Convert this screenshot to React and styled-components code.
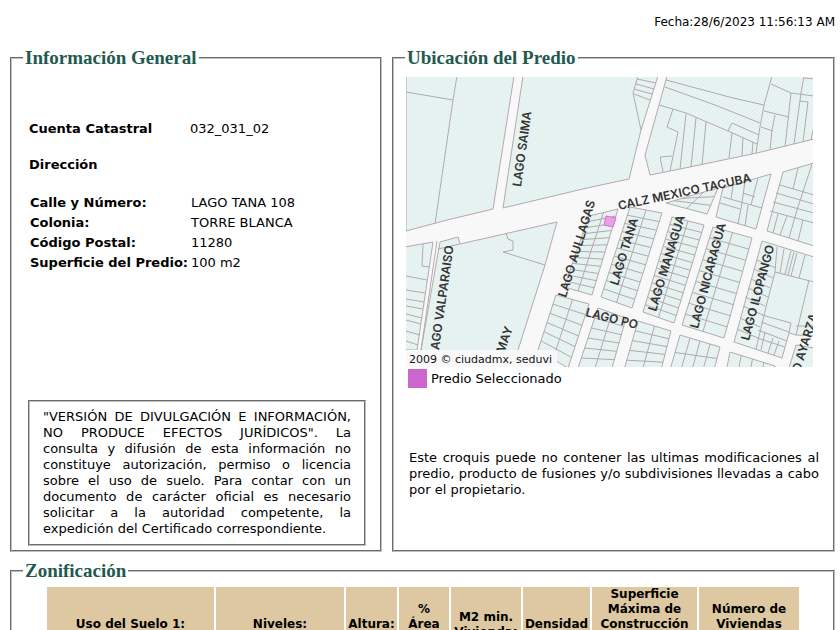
import React from 'react'

import styled, { createGlobalStyle } from 'styled-components'

const GlobalStyle = createGlobalStyle`
    body {
        margin: 0;
        background: #FFF;
        color: #000;
        font-family: Verdana, 'DejaVu Sans', sans-serif;
        font-size: 13px;
        line-height: 16px;
        overflow-x: hidden;
    }
`

const StyledPage = styled.main`
    padding: 14px 5px 0 10px;
`

const StyledDate = styled.div`
    text-align: right;
    font-size: 12px;
    margin-bottom: 18px;
`

const StyledColumns = styled.div`
    display: grid;
    grid-template-columns: 372fr 443fr;
    gap: 10px;
    margin-bottom: 9px;
`

const StyledFieldset = styled.fieldset`
    margin: 0;
    min-width: 0;
    padding: 0 11px;
    border: 2px groove #C0C0C0;
`

const StyledLegend = styled.legend`
    padding: 0 2px;
    color: #1F5A4E;
    font-family: 'Liberation Serif', serif;
    font-size: 19px;
    font-weight: bold;
    line-height: 20px;
`

const StyledGeneral = styled.div`
    display: flex;
    flex-direction: column;
    padding: 53px 3px 4px 5px;
`

const StyledList = styled.dl`
    display: grid;
    grid-template-columns: ${props => props.$labelWidth} 1fr;
    row-gap: ${props => props.$gap};
    margin: 0;
    padding-left: ${props => props.$indent || '0'};
    white-space: nowrap;

    dt {
        font-weight: bold;
    }

    dd {
        margin: 0;
    }
`

const StyledSubtitle = styled.h2`
    margin: 20px 0 22px 1px;
    font-size: 13px;
    line-height: 16px;
`

const StyledNotice = styled.p`
    margin: 129px 0 0;
    padding: 7px 13px;
    border: 2px groove #C0C0C0;
    text-align: justify;
`

const StyledLocation = styled.div`
    padding: 9px 3px 0 1px;
`

const StyledMap = styled.svg`
    display: block;
    width: 100%;
    max-width: 407px;
    height: auto;

    .block {
        fill: url(#hatch);
        stroke: #B3AAAB;
    }

    .lot {
        fill: none;
        stroke: #B3AAAB;
    }

    .street {
        fill: #333;
        font: 600 12px Inter, sans-serif;
    }

    .credit {
        fill: #111;
        font: 11px 'DejaVu Sans', sans-serif;
    }
`

const StyledKey = styled.div`
    display: flex;
    align-items: center;
    gap: 4px;
    margin: 2px 0 62px 2px;
`

const StyledSwatch = styled.span`
    width: 19px;
    height: 19px;
    background: #CC66CC;
`

const StyledWarning = styled.p`
    margin: 0 0 0 3px;
    text-align: justify;
`

const StyledTableWrapper = styled.div`
    padding: 4px 22px 12px;
`

const StyledTable = styled.table`
    width: 100%;
    max-width: 756px;
    table-layout: fixed;
    border-spacing: 2px;
`

const StyledTh = styled.th`
    width: ${props => props.$width}px;
    padding: 0;
    background: #DDC8A2;
    font-size: 12px;
    line-height: 15px;
    vertical-align: middle;
    white-space: pre-line;
`

const address = [
    ['Calle y Número:', 'LAGO TANA 108'],
    ['Colonia:', 'TORRE BLANCA'],
    ['Código Postal:', '11280'],
    ['Superficie del Predio:', '100 m2']
]

const headers = [
    ['Uso del Suelo 1:', 167],
    ['Niveles:', 128],
    ['Altura:', 51],
    ['%\nÁrea\nLibre', 50],
    ['M2 min.\nVivienda:', 70],
    ['Densidad', 67],
    ['Superficie\nMáxima de\nConstrucción\n(Sujeta a\nrestricciones*)', 105],
    ['Número de\nViviendas\nPermitidas', 100]
]

const blocks = [
    '406,76 514,76 493,209 447,220 406,231',
    '523,76 503,208 587,188 629,179 641,130 658,76',
    '667,76 659,105 645,155 650,175 680,169 757,153 814,139 814,76',
    '440,242 458,237 460,244 557,222 545,265 518,350 518,368 419,368 421,350',
    '405,247 433,242 417,350 405,350',
    '723,188 771,174 756,229 716,217',
    '783,172 814,163 814,246 767,231',
    '762,241 814,257 814,336 796,335 789,333 782,358 734,342',
    '796,345 814,348 814,368 789,368'
]

// corners run clockwise from the top left one: [corners, columns, rows]
const grids = [
    [[[589, 216], [618, 209], [592, 295], [564, 287]], 2, 12],
    [[[630, 207], [662, 213], [632, 308], [601, 297]], 2, 11],
    [[[672, 217], [704, 225], [674, 323], [643, 312]], 2, 13],
    [[[713, 227], [752, 238], [724, 338], [682, 325]], 2, 9],
    [[[556, 295], [589, 304], [568, 368], [538, 350]], 2, 6],
    [[[598, 308], [626, 318], [612, 368], [578, 368]], 2, 6],
    [[[638, 321], [671, 331], [661, 370], [624, 370]], 2, 5],
    [[[680, 335], [720, 347], [714, 370], [670, 370]], 4, 2],
    [[[730, 352], [775, 366], [774, 372], [726, 372]], 4, 1],
    [[[690, 196], [718, 188], [707, 214], [666, 203]], 2, 3]
]

const lots = [
    '457,76 453,100 435,224', '406,92 453,100',
    '638,76 633,93 641,130', '637,79 656,83', '636,84 654,89', '634,89 652,94', '634,94 650,100',
    '666,80 733,98 764,105', '665,87 715,105 760,123', '659,105 686,113 728,131 757,144',
    '772,76 764,105 760,127 756,153', '771,84 791,93 814,96', '764,111 789,117', '791,93 785,147',
    '804,76 801,93 794,144', '800,101 808,102 803,142', '775,115 772,130 770,150', '761,127 773,131',
    '673,109 667,127 678,132 670,171', '663,172 660,157 672,156', '686,114 680,169', '696,118 691,167',
    '706,122 702,165', '728,131 732,123 759,135', '732,133 729,158', '743,138 742,156', '753,142 752,154',
    '804,78 814,79', '811,140 814,126',
    '545,265 503,252 513,250 513,241 508,239 506,233', '438,249 460,244',
    '423,244 422,266 429,267', '406,276 427,280', '406,290 425,293', '406,299 424,302', '406,306 423,309',
    '406,314 422,318', '406,320 421,324', '406,331 420,335', '406,341 418,345', '437,241 421,350',
    '723,197 762,208', '720,203 740,209', '745,181 742,203 738,224', '733,186 731,199', '743,193 755,197',
    '758,178 753,197 751,205', '748,205 745,226',
    '780,185 814,195', '776,193 814,204', '773,202 814,213', '770,211 814,223', '798,168 793,189',
    '812,164 797,210 789,238', '778,214 773,233', '787,216 780,235', '803,220 798,241',
    '777,247 775,272 814,282', '775,272 767,303 756,349', '809,280 796,335', '796,326 814,326',
    '784,249 780,273', '791,251 785,274', '794,252 788,275', '797,253 791,276', '805,255 799,278',
    '757,260 776,268', '754,269 773,278', '751,279 770,288', '748,288 768,297', '745,297 765,306',
    '743,306 763,315', '740,318 760,327', '737,329 758,338',
    '762,315 791,323 789,333', '761,322 789,332', '758,330 787,341', '757,338 785,347',
    '765,332 761,350', '773,338 768,353', '779,341 774,355'
]

const streets = [
    ['LAGO SAIMA', 521, 187, -82],
    ['CALZ MEXICO TACUBA', 619, 210, -12],
    ['LAGO AULLAGAS', 566, 298, -73],
    ['LAGO VALPARAISO', 438, 357, -82],
    ['MAY', 504, 354, -71],
    ['LAGO TANA', 618, 286, -73],
    ['LAGO MANAGUA', 656, 312, -73],
    ['LAGO NICARAGUA', 698, 329, -75],
    ['LAGO ILOPANGO', 749, 341, -75],
    ['LAGO AYARZA', 793, 396, -73],
    ['LAGO PO', 585, 316, 14]
]

const between = (a, b, t) => [a[0] + (b[0] - a[0]) * t, a[1] + (b[1] - a[1]) * t]

const gridPath = ([[a, b, c, d], columns, rows]) => {
    const lines = []

    for (let i = 1; i < columns; i++) {
        lines.push(`M${between(a, b, i / columns)}L${between(d, c, i / columns)}`)
    }

    for (let i = 1; i < rows; i++) {
        lines.push(`M${between(a, d, i / rows)}L${between(b, c, i / rows)}`)
    }

    return lines.join('')
}

const LocationMap = () => (
    <StyledMap viewBox="406 77 407 290" role="img" aria-label="Ubicación del Predio">
        <defs>
            <pattern id="hatch" width="4" height="4" patternUnits="userSpaceOnUse">
                <rect width="4" height="4" fill="#EAF2F2" />
                <path d="M-1 1l2-2M0 4l4-4M3 5l2-2" stroke="#D8F1EF" />
            </pattern>
        </defs>
        <rect x="406" y="77" width="407" height="290" fill="#F8F8F8" />
        {blocks.map(points => <polygon key={points} className="block" points={points} />)}
        {grids.map(grid => (
            <g key={grid[0].join()}>
                <polygon className="block" points={grid[0].join(' ')} />
                <path className="lot" d={gridPath(grid)} />
            </g>
        ))}
        {lots.map(points => <polyline key={points} className="lot" points={points} />)}
        <polygon points="606,216 616,218 613,227 604,225" fill="#E9A0E6" stroke="#D56FD3" />
        {streets.map(([name, x, y, angle]) => (
            <text key={name} className="street" transform={`translate(${x} ${y}) rotate(${angle})`}>{name}</text>
        ))}
        <rect x="406" y="350" width="151" height="17" fill="#F8F8F8" />
        <text className="credit" x="409" y="363">2009 © ciudadmx, seduvi</text>
    </StyledMap>
)

const App = () => (
    <>
        <GlobalStyle />
        <StyledPage>
            <StyledDate>Fecha:28/6/2023 11:56:13 AM</StyledDate>
            <StyledColumns>
                <StyledFieldset>
                    <StyledLegend>Información General</StyledLegend>
                    <StyledGeneral>
                        <StyledList $labelWidth="161px" $gap="0" $indent="1px">
                            <dt>Cuenta Catastral</dt>
                            <dd>032_031_02</dd>
                        </StyledList>
                        <StyledSubtitle>Dirección</StyledSubtitle>
                        <StyledList $labelWidth="161px" $gap="4px" $indent="2px">
                            {address.map(([label, value]) => (
                                <React.Fragment key={label}>
                                    <dt>{label}</dt>
                                    <dd>{value}</dd>
                                </React.Fragment>
                            ))}
                        </StyledList>
                        <StyledNotice>
                            "VERSIÓN DE DIVULGACIÓN E INFORMACIÓN, NO PRODUCE EFECTOS JURÍDICOS". La consulta y
                            difusión de esta información no constituye autorización, permiso o licencia sobre el
                            uso de suelo. Para contar con un documento de carácter oficial es necesario solicitar
                            a la autoridad competente, la expedición del Certificado correspondiente.
                        </StyledNotice>
                    </StyledGeneral>
                </StyledFieldset>
                <StyledFieldset>
                    <StyledLegend>Ubicación del Predio</StyledLegend>
                    <StyledLocation>
                        <LocationMap />
                        <StyledKey>
                            <StyledSwatch />
                            <span>Predio Seleccionado</span>
                        </StyledKey>
                        <StyledWarning>
                            Este croquis puede no contener las ultimas modificaciones al predio, producto de
                            fusiones y/o subdivisiones llevadas a cabo por el propietario.
                        </StyledWarning>
                    </StyledLocation>
                </StyledFieldset>
            </StyledColumns>
            <StyledFieldset>
                <StyledLegend>Zonificación</StyledLegend>
                <StyledTableWrapper>
                    <StyledTable>
                        <thead>
                            <tr>
                                {headers.map(([title, width]) => (
                                    <StyledTh key={title} scope="col" $width={width}>{title}</StyledTh>
                                ))}
                            </tr>
                        </thead>
                    </StyledTable>
                </StyledTableWrapper>
            </StyledFieldset>
        </StyledPage>
    </>
)

export default App
